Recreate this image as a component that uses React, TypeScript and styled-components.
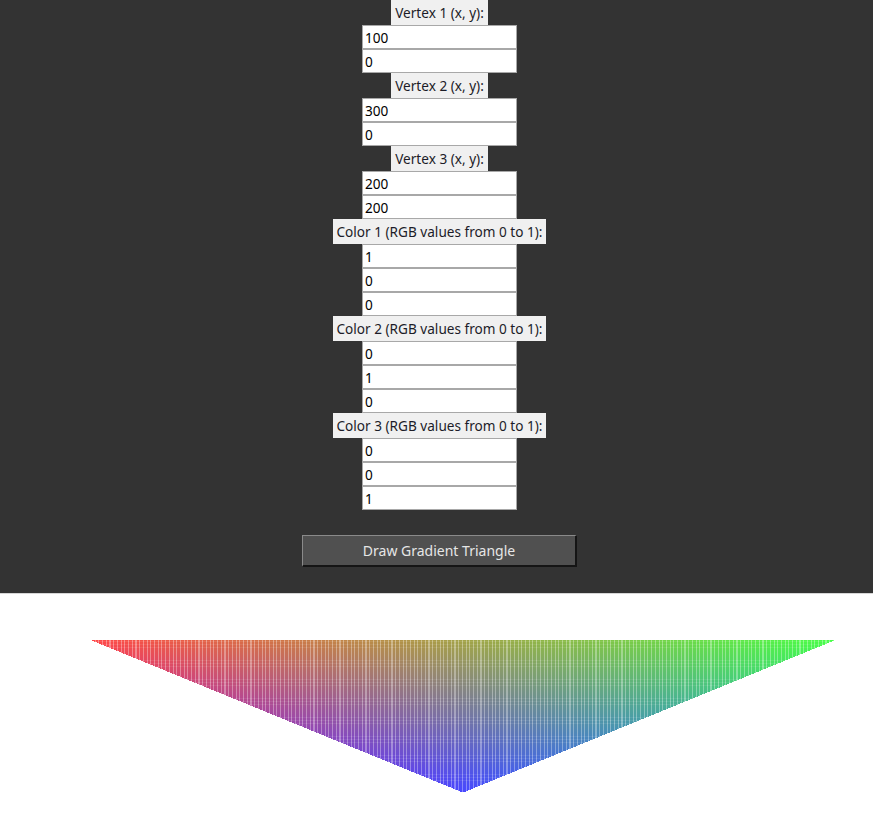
import { Fragment, useEffect, useRef } from "react";
import styled, { createGlobalStyle } from "styled-components";

const GlobalStyle = createGlobalStyle`
  html, body {
    margin: 0;
    padding: 0;
    background: #ffffff;
  }
  body {
    font-family: "Noto Sans", "DejaVu Sans", sans-serif;
  }
`;

const Panel = styled.div`
  display: flex;
  flex-direction: column;
  align-items: center;
  background: #333333;
  padding: 0 0 26px 6px;
  border-bottom: 1px solid #d6d6d6;
`;

const FieldLabel = styled.div`
  height: 25px;
  display: flex;
  align-items: center;
  padding: 0 4px;
  background: #f0f0f0;
  color: #1c1c28;
  font-size: 13.6px;
  line-height: 1;
  white-space: nowrap;
`;

const Entry = styled.input`
  box-sizing: border-box;
  width: 155px;
  height: 24px;
  margin: 0;
  padding: 0 2px;
  border: 1px solid #a8a8a8;
  background: #ffffff;
  color: #000000;
  font-family: "Noto Sans", "DejaVu Sans", sans-serif;
  font-size: 13.6px;
  outline: none;
`;

const DrawButton = styled.button`
  box-sizing: border-box;
  margin-top: 25px;
  width: 275px;
  height: 32px;
  background: #505050;
  color: #e6e6e6;
  font-family: "Noto Sans", "DejaVu Sans", sans-serif;
  font-size: 14px;
  border-style: solid;
  border-width: 1px 2px 2px 1px;
  border-color: #8a8a8a #151515 #151515 #8a8a8a;
  cursor: pointer;
`;

const Canvas = styled.canvas`
  display: block;
`;

type Group = { label: string; values: string[] };

const groups: Group[] = [
  { label: "Vertex 1 (x, y):", values: ["100", "0"] },
  { label: "Vertex 2 (x, y):", values: ["300", "0"] },
  { label: "Vertex 3 (x, y):", values: ["200", "200"] },
  { label: "Color 1 (RGB values from 0 to 1):", values: ["1", "0", "0"] },
  { label: "Color 2 (RGB values from 0 to 1):", values: ["0", "1", "0"] },
  { label: "Color 3 (RGB values from 0 to 1):", values: ["0", "0", "1"] },
];

const W = 873;
const H = 235;

const GradientTriangle = () => {
  const ref = useRef<HTMLCanvasElement>(null);

  useEffect(() => {
    const ctx = ref.current?.getContext("2d");
    if (!ctx) return;
    const img = ctx.createImageData(W, H);
    const ax = 92, ay = 46;
    const bx = 834, by = 46;
    const cx = 463, cy = 198;
    const den = (by - cy) * (ax - cx) + (cx - bx) * (ay - cy);
    const sx = 3.71;
    const sy = 0.76;
    for (let y = 0; y < H; y++) {
      for (let x = 0; x < W; x++) {
        const i = (y * W + x) * 4;
        const px = x + 0.5, py = y + 0.5;
        const l1 = ((by - cy) * (px - cx) + (cx - bx) * (py - cy)) / den;
        const l2 = ((cy - ay) * (px - cx) + (ax - cx) * (py - cy)) / den;
        const l3 = 1 - l1 - l2;
        if (l1 < -0.002 || l2 < -0.002 || l3 < -0.002) {
          img.data[i] = 255;
          img.data[i + 1] = 255;
          img.data[i + 2] = 255;
          img.data[i + 3] = 255;
          continue;
        }
        const fx = ((px - ax) / sx) % 1;
        const fy = ((py - ay) / sy) % 1;
        let mix = 0.28;
        if (fx > 0.7) mix = 0.52;
        if (fy > 0.85) mix += 0.06;
        const r = Math.max(0, Math.min(1, l1));
        const g = Math.max(0, Math.min(1, l2));
        const b = Math.max(0, Math.min(1, l3));
        img.data[i] = Math.round(r * 255 * (1 - mix) + 255 * mix);
        img.data[i + 1] = Math.round(g * 255 * (1 - mix) + 255 * mix);
        img.data[i + 2] = Math.round(b * 255 * (1 - mix) + 255 * mix);
        img.data[i + 3] = 255;
      }
    }
    ctx.putImageData(img, 0, 0);
  }, []);

  return <Canvas ref={ref} width={W} height={H} />;
};

const App = () => {
  return (
    <>
      <GlobalStyle />
      <Panel>
        {groups.map((g) => (
          <Fragment key={g.label}>
            <FieldLabel>{g.label}</FieldLabel>
            {g.values.map((v, i) => (
              <Entry key={i} defaultValue={v} />
            ))}
          </Fragment>
        ))}
        <DrawButton>Draw Gradient Triangle</DrawButton>
      </Panel>
      <GradientTriangle />
    </>
  );
};

export default App;
